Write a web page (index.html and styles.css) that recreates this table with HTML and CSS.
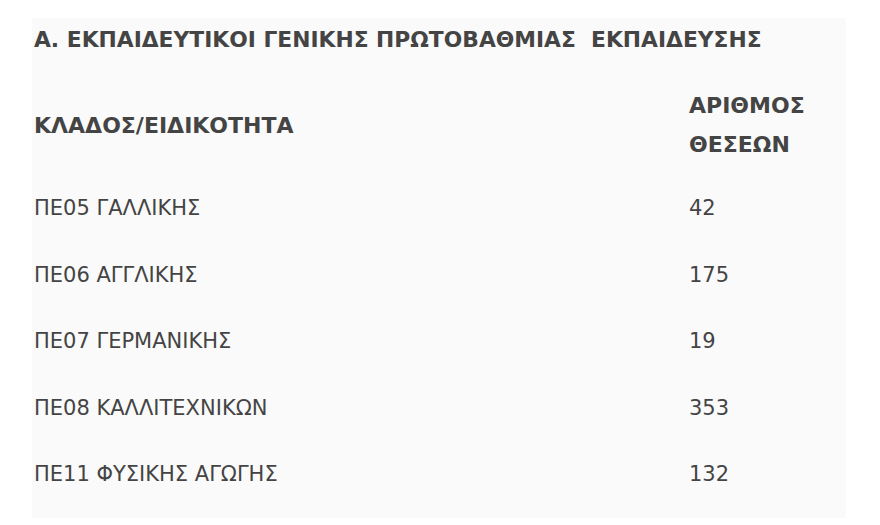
FILE: index.html
```html
<!DOCTYPE html>
<html lang="el">
<head>
<meta charset="utf-8">
<title>Θέσεις</title>
<link rel="stylesheet" href="styles.css">
</head>
<body>
<div class="panel">
  <h2 class="title">Α. ΕΚΠΑΙΔΕΥΤΙΚΟΙ ΓΕΝΙΚΗΣ ΠΡΩΤΟΒΑΘΜΙΑΣ&nbsp; ΕΚΠΑΙΔΕΥΣΗΣ</h2>
  <div class="table">
    <div class="head">ΚΛΑΔΟΣ/ΕΙΔΙΚΟΤΗΤΑ</div>
    <div class="head head-num">ΑΡΙΘΜΟΣ<br>ΘΕΣΕΩΝ</div>
    <div class="cell">ΠΕ05 ΓΑΛΛΙΚΗΣ</div>
    <div class="cell">42</div>
    <div class="cell">ΠΕ06 ΑΓΓΛΙΚΗΣ</div>
    <div class="cell">175</div>
    <div class="cell">ΠΕ07 ΓΕΡΜΑΝΙΚΗΣ</div>
    <div class="cell">19</div>
    <div class="cell">ΠΕ08 ΚΑΛΛΙΤΕΧΝΙΚΩΝ</div>
    <div class="cell">353</div>
    <div class="cell">ΠΕ11 ΦΥΣΙΚΗΣ ΑΓΩΓΗΣ</div>
    <div class="cell">132</div>
  </div>
</div>
</body>
</html>
```
FILE: styles.css
```css
html, body {
  margin: 0;
  padding: 0;
  background: #ffffff;
}
body {
  font-family: "DejaVu Sans", Verdana, sans-serif;
  color: #444444;
}
.panel {
  box-sizing: border-box;
  margin: 18px 0 0 32px;
  width: 814px;
  height: 500px;
  background: #fafafa;
  padding: 7px 0 0 2px;
}
.title {
  margin: 0;
  font-size: 21.8px;
  line-height: 30px;
  font-weight: bold;
  white-space: nowrap;
}
.table {
  margin-top: 20px;
  display: grid;
  grid-template-columns: 655px 1fr;
  grid-template-rows: 100px;
  grid-auto-rows: 66.6px;
}
.head {
  font-size: 22px;
  font-weight: bold;
  line-height: 39px;
  align-self: center;
}
.cell {
  font-size: 21px;
  line-height: 66.6px;
}
```
